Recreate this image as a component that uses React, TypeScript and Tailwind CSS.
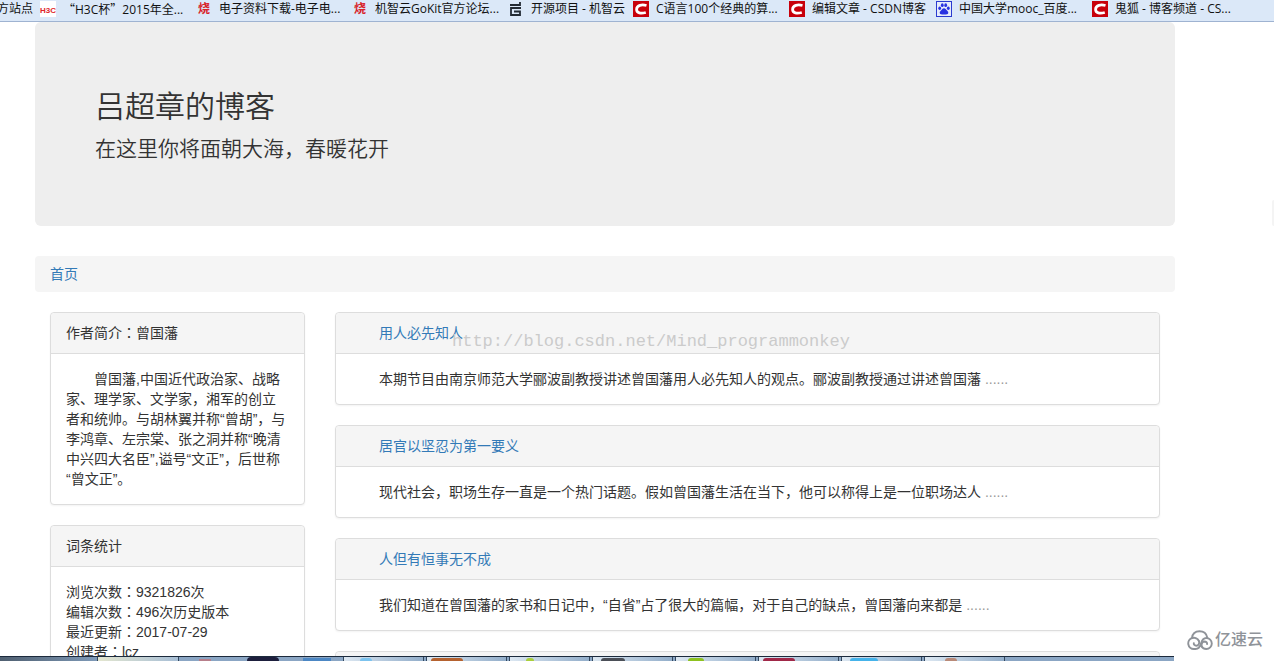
import type { ReactNode } from "react";

const H3cIcon = () => (
  <svg className="size-4 shrink-0 bg-white" viewBox="0 0 16 16">
    <text
      x="8"
      y="12"
      textAnchor="middle"
      fontSize="8"
      fontWeight="bold"
      fill="#e0262b"
      fontFamily="Liberation Sans, sans-serif"
    >
      H3C
    </text>
  </svg>
);

const ShaoIcon = () => (
  <span className="w-4 shrink-0 text-center text-xs leading-4 font-bold text-[#d8232a]">
    烧
  </span>
);

const GizwitsIcon = () => (
  <svg className="size-4 shrink-0" viewBox="0 0 16 16" fill="none">
    <path
      d="M12 1v3H2M13 7H3v7h9v-3.500H6"
      stroke="#222a33"
      strokeWidth="1.800"
    />
  </svg>
);

const CsdnIcon = () => (
  <svg className="size-4 shrink-0 bg-[#c8000b]" viewBox="0 0 16 16" fill="none">
    <path
      d="M13.500 4.500C9 3.300 3.800 4 3.600 8.200C3.500 12.300 8 12.800 12.800 11.500"
      stroke="#fff"
      strokeWidth="2.800"
    />
  </svg>
);

const BaiduIcon = () => (
  <svg className="size-4 shrink-0" viewBox="0 0 16 16">
    <rect x="0.5" y="0.5" width="15" height="15" fill="#e6ecfb" stroke="#2b3bd0" />
    <g fill="#2932e1">
      <ellipse cx="3.700" cy="7.300" rx="1.400" ry="1.800" />
      <ellipse cx="6.300" cy="4.200" rx="1.400" ry="1.900" />
      <ellipse cx="9.700" cy="4.200" rx="1.400" ry="1.900" />
      <ellipse cx="12.300" cy="7.300" rx="1.400" ry="1.800" />
      <path d="M8 7.200c1.400 0 2 1.300 3 2.300s1.500 1.600 1.200 2.800c-.4 1.400-2.200 1.300-4.200 1.300s-3.800.1-4.200-1.300c-.3-1.200.2-1.800 1.200-2.800s1.600-2.300 3-2.300z" />
    </g>
  </svg>
);

// full-width quotation mark
const Quote = ({ children }: { children: string }) => (
  <span className="font-['Noto_Sans_CJK_SC',sans-serif]">{children}</span>
);

// colon centred in its cell
const Colon = () => (
  <span className="font-['Noto_Sans_CJK_TC',sans-serif] leading-none">：</span>
);

const bookmarks: { icon: ReactNode; label: ReactNode; width: string }[] = [
  {
    icon: <H3cIcon />,
    label: (
      <>
        <Quote>“</Quote>H3C杯<Quote>”</Quote>2015年全...
      </>
    ),
    width: "w-[156px]",
  },
  { icon: <ShaoIcon />, label: "电子资料下载-电子电...", width: "w-[156px]" },
  { icon: <ShaoIcon />, label: "机智云GoKit官方论坛...", width: "w-[156px]" },
  { icon: <GizwitsIcon />, label: "开源项目 - 机智云", width: "w-[125px]" },
  { icon: <CsdnIcon />, label: "C语言100个经典的算...", width: "w-[156px]" },
  { icon: <CsdnIcon />, label: "编辑文章 - CSDN博客", width: "w-[147px]" },
  { icon: <BaiduIcon />, label: "中国大学mooc_百度...", width: "w-[156px]" },
  { icon: <CsdnIcon />, label: "鬼狐 - 博客频道 - CS...", width: "w-[156px]" },
];

const articles = [
  {
    title: "用人必先知人",
    text: "本期节目由南京师范大学郦波副教授讲述曾国藩用人必先知人的观点。郦波副教授通过讲述曾国藩",
  },
  {
    title: "居官以坚忍为第一要义",
    text: "现代社会，职场生存一直是一个热门话题。假如曾国藩生活在当下，他可以称得上是一位职场达人",
  },
  {
    title: "人但有恒事无不成",
    text: "我们知道在曾国藩的家书和日记中，“自省”占了很大的篇幅，对于自己的缺点，曾国藩向来都是",
  },
  { title: "", text: "" },
];

const stats = [
  { name: "浏览次数", value: "9321826次" },
  { name: "编辑次数", value: "496次历史版本" },
  { name: "最近更新", value: "2017-07-29" },
  { name: "创建者", value: "lcz" },
];

// top edge of the icon that shows in each task button
const tasks = [
  "ml-4 w-3 bg-[#7cc3ee]",
  "ml-1 w-8 bg-[#b5622f]",
  "ml-4 w-2 bg-[#a9cf3a]",
  "ml-2 w-6 bg-[#4b4f57]",
  "ml-3 w-4 bg-[#8dc21f]",
  "ml-1 w-8 bg-[#a02848]",
  "ml-2 w-7 bg-[#45b3ea]",
  "ml-5 w-3 bg-[#b98a78]",
];

function BookmarkBar() {
  return (
    <nav className="flex h-[22px] shrink-0 items-start overflow-hidden whitespace-nowrap border-b border-[#9fb3d1] bg-[#dbe8f8] font-['Open_Sans','Noto_Sans_CJK_SC',sans-serif] text-xs leading-[17px] text-[#111]">
      <a href="#" className="flex w-10 shrink-0 justify-end pr-[7px]">
        方站点
      </a>
      {bookmarks.map((b, i) => (
        <a
          key={i}
          href="#"
          className={`flex h-[17px] shrink-0 items-center gap-[7px] ${b.width}`}
        >
          {b.icon}
          <span>{b.label}</span>
        </a>
      ))}
    </nav>
  );
}

function Panel({ title, children }: { title: ReactNode; children: ReactNode }) {
  return (
    <section className="mb-5 rounded border border-[#ddd] bg-white shadow-xs">
      <h3 className="min-h-[41px] rounded-t border-b border-[#ddd] bg-[#f5f5f5] px-[15px] py-[10px]">
        {title}
      </h3>
      <div className="p-[15px]">{children}</div>
    </section>
  );
}

function Taskbar() {
  return (
    <footer className="mr-[100px] flex h-[5px] shrink-0 items-stretch overflow-hidden border-t border-[#1c2a3c] bg-[#8ba6c4]">
      <div className="w-[97px] shrink-0 bg-linear-to-r from-[#4f5f70] to-[#7f9ab8]"></div>
      <div className="w-[82px] shrink-0 border-x border-[#33475e] bg-linear-to-r from-[#e4e6cf] to-[#a8bfd6]"></div>
      <div className="flex w-[164px] shrink-0 items-end">
        <div className="ml-5 h-[2px] w-3 bg-[#b77f8b]"></div>
        <div className="ml-9 h-1 w-8 rounded-t bg-[#1d1f3d]"></div>
        <div className="ml-6 h-[3px] w-7 bg-[#4c87c4]"></div>
      </div>
      {tasks.map((t) => (
        <div
          key={t}
          className="mr-[2px] flex w-[81px] shrink-0 items-end border-x border-[#33475e] bg-linear-to-r from-[#dce7f1] to-[#93aeca]"
        >
          <div className={`h-[3px] rounded-t ${t}`}></div>
        </div>
      ))}
    </footer>
  );
}

function CloudLogo() {
  return (
    <div className="absolute right-[11px] bottom-[9px] flex items-center gap-[2px] text-base leading-6 font-medium text-[#8f9399]">
      <svg
        className="h-5 w-[26px]"
        viewBox="0 0 26 20"
        fill="none"
        stroke="currentColor"
        strokeWidth="1.900"
        strokeLinecap="round"
      >
        <path d="M5 8C5.500 3.800 8.500 1.200 12.500 1.200c4 0 7 2.600 7.700 6.200" />
        <path d="M12 11.200A5.600 5.600 0 1 0 7 19h1.500c3.500 0 4.700-2.500 5.500-5.500C15 10 16.500 8 19.300 8a5.500 5.500 0 0 1 0 11c-2.300 0-3.800-1-4.600-2.500" />
        <path d="M12 11.200c.8 2.300-.6 4.500-2.700 4.500-1.700 0-2.700-1.200-2.500-2.600" />
        <path d="M14.700 16.500c-.6-2.600.7-4.900 2.800-5 1.700 0 2.800 1.100 2.600 2.600" />
      </svg>
      <span>亿速云</span>
    </div>
  );
}

export default function App() {
  return (
    <div className="relative flex h-screen flex-col overflow-hidden bg-white font-['Liberation_Sans','Noto_Sans_CJK_SC',sans-serif] text-sm leading-5 text-[#333]">
      <BookmarkBar />
      <main className="min-h-0 flex-1 overflow-hidden pr-[99px] pl-[35px]">
        <header className="mb-[30px] rounded-md bg-[#eee] px-[60px] pt-[68px] pb-[62px]">
          <h1 className="mb-[11px] text-3xl leading-[33px] font-[350]">
            吕超章的博客
          </h1>
          <p className="text-[21px] leading-[30px] font-[350]">
            在这里你将面朝大海，春暖花开
          </p>
        </header>
        <nav className="mb-5 rounded bg-[#f5f5f5] px-[15px] py-2">
          <a href="#" className="text-[#337ab7]">
            首页
          </a>
        </nav>
        <div className="flex">
          <aside className="w-1/4 px-[15px]">
            <Panel
              title={
                <>
                  作者简介
                  <Colon />
                  曾国藩
                </>
              }
            >
              <p className="indent-7">
                曾国藩,中国近代政治家、战略家、理学家、文学家，湘军的创立者和统帅。与胡林翼并称“曾胡”，与李鸿章、左宗棠、张之洞并称“晚清中兴四大名臣”,谥号“文正”，后世称
                <br />
                “曾文正”。
              </p>
            </Panel>
            <Panel title="词条统计">
              <ul>
                {stats.map((s) => (
                  <li key={s.name}>
                    {s.name}
                    <Colon />
                    {s.value}
                  </li>
                ))}
              </ul>
            </Panel>
          </aside>
          <div className="relative w-3/4 px-[15px]">
            {articles.map((a) => (
              <Panel
                key={a.title}
                title={
                  <a href="#" className="ml-7 text-[#337ab7]">
                    {a.title}
                  </a>
                }
              >
                <p className="indent-7">
                  {a.text}{" "}
                  {a.text && (
                    <a href="#" className="text-[#999]">
                      ......
                    </a>
                  )}
                </p>
              </Panel>
            ))}
            <span className="absolute top-5 left-[132px] font-['Liberation_Mono',monospace] text-[17px] text-[#cbcbcb]">
              http://blog.csdn.net/Mind_programmonkey
            </span>
          </div>
        </div>
      </main>
      <Taskbar />
      <div className="absolute top-[200px] right-0 h-[26px] w-[2px] rounded-l bg-[#f4f4f4]"></div>
      <CloudLogo />
    </div>
  );
}
